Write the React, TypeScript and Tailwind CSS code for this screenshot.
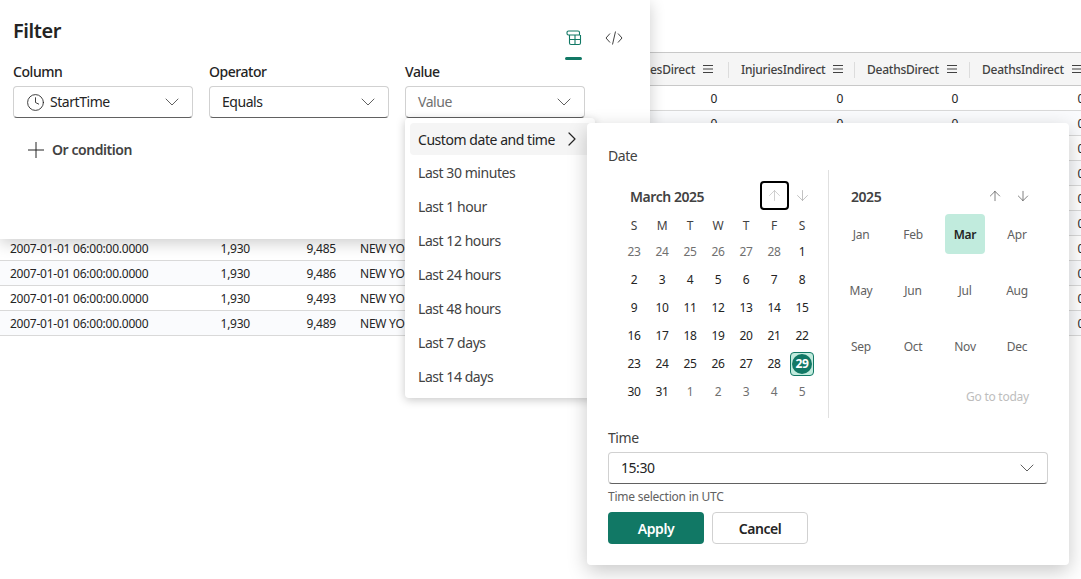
import { ArrowDown, ArrowUp, ChevronDown, ChevronRight, Clock } from 'lucide-react'

const rows = [
  { id: '9,481', shade: false },
  { id: '9,482', shade: true },
  { id: '9,483', shade: false },
  { id: '9,484', shade: true },
  { id: '9,487', shade: false },
  { id: '9,488', shade: true },
  { id: '9,485', shade: false },
  { id: '9,486', shade: true },
  { id: '9,493', shade: false },
  { id: '9,489', shade: true },
]

const gridCols = 'grid grid-cols-[262px_86px_254px_126px_126px_115px_126px]'

const quickRanges = [
  'Last 30 minutes',
  'Last 1 hour',
  'Last 12 hours',
  'Last 24 hours',
  'Last 48 hours',
  'Last 7 days',
  'Last 14 days',
]

const weeks = [
  ['23', '24', '25', '26', '27', '28', '1'],
  ['2', '3', '4', '5', '6', '7', '8'],
  ['9', '10', '11', '12', '13', '14', '15'],
  ['16', '17', '18', '19', '20', '21', '22'],
  ['23', '24', '25', '26', '27', '28', '29'],
  ['30', '31', '1', '2', '3', '4', '5'],
]

const months = ['Jan', 'Feb', 'Mar', 'Apr', 'May', 'Jun', 'Jul', 'Aug', 'Sep', 'Oct', 'Nov', 'Dec']

function MenuLines() {
  return (
    <svg width="12" height="10" viewBox="0 0 12 10" className="shrink-0 text-[#424242]">
      <path d="M1 1.5h10M1 5h10M1 8.5h10" stroke="currentColor" strokeWidth="1.2" />
    </svg>
  )
}

function HeaderCell({ label }: { label: string }) {
  return (
    <div className="flex items-center relative pl-[13px] gap-[7px]">
      <span className="absolute left-0 top-[9px] h-[16px] w-px bg-[#dcdcdc]" />
      <span className="whitespace-nowrap font-medium pt-[2px]">{label}</span>
      <MenuLines />
    </div>
  )
}

function DataTable() {
  return (
    <div className="absolute left-0 top-[52px] w-[1095px] text-[12px] tracking-[-0.02em] text-[#242424]">
      <div className={`${gridCols} h-[34px] bg-[#f5f5f5] border-y border-[#c8c8c8] text-[#424242]`}>
        <div />
        <div />
        <div />
        <div className="flex items-center justify-end pr-[14px] gap-[7px]">
          <span className="whitespace-nowrap font-medium pt-[2px]">InjuriesDirect</span>
          <MenuLines />
        </div>
        <HeaderCell label="InjuriesIndirect" />
        <HeaderCell label="DeathsDirect" />
        <HeaderCell label="DeathsIndirect" />
      </div>
      {rows.map((row) => (
        <div
          key={row.id}
          className={`${gridCols} h-[25px] items-center pt-px border-b border-[#d9d9d9] ${row.shade ? 'bg-[#fafbfd]' : 'bg-white'}`}
        >
          <div className="flex justify-between pl-[10px] pr-[12px]">
            <span>2007-01-01 06:00:00.0000</span>
            <span>1,930</span>
          </div>
          <div className="text-right pr-[12px]">{row.id}</div>
          <div className="pl-[12px]">NEW YORK</div>
          <div className="text-right pr-[11px]">0</div>
          <div className="text-right pr-[11px]">0</div>
          <div className="text-right pr-[11px]">0</div>
          <div className="text-right pr-[11px]">0</div>
        </div>
      ))}
    </div>
  )
}

function SelectBox({ value, placeholder, withClock }: { value: string; placeholder?: boolean; withClock?: boolean }) {
  return (
    <div className="h-[32px] flex items-center bg-white border border-[#d1d1d1] border-b-[#616161] rounded-[4px] pl-[12px] pr-[8px]">
      {withClock && <Clock size={19} strokeWidth={1.1} className="mr-[5px] text-[#242424] shrink-0" />}
      <span className={`text-[14px] leading-none flex-1 ${placeholder ? 'text-[#707070]' : 'text-[#242424]'}`}>{value}</span>
      <ChevronDown size={24} strokeWidth={1} className="text-[#616161]" />
    </div>
  )
}

function Field({ label, children }: { label: string; children: React.ReactNode }) {
  return (
    <div className="w-[180px]">
      <div className="h-[20px] mb-[4px] text-[14px] font-medium leading-[20px] text-[#242424]">{label}</div>
      {children}
    </div>
  )
}

function FilterPanel() {
  return (
    <div className="absolute left-0 top-0 w-[650px] h-[239px] bg-white rounded-br-[4px] shadow-[0_4px_16px_rgba(0,0,0,0.2)] pl-[13px]">
      <div className="flex h-[62px]">
        <h1 className="text-[20px] font-semibold text-[#242424] leading-[28px] pt-[17px] flex-1">Filter</h1>
        <div className="flex mr-[27px] pt-[30px] gap-[23px]">
          <div className="flex flex-col items-center w-[17px]">
            <svg width="16" height="16" viewBox="0 0 16 16" fill="none" stroke="#117865" strokeWidth="1.1">
              <path d="M2.5 1h9.5a1.5 1.5 0 0 1 1.5 1.5V5H2.5a1.5 1.5 0 0 1-1.5-1.5v-1A1.5 1.5 0 0 1 2.5 1z" />
              <path d="M3.5 5v8a1.5 1.5 0 0 0 1.5 1.5h8a1.5 1.5 0 0 0 1.5-1.5V5M3.5 9.5h11M9 5v9.5" />
            </svg>
            <span className="w-[17px] h-[3px] mt-[11px] rounded-full bg-[#117865]" />
          </div>
          <svg width="18" height="16" viewBox="0 0 18 16" fill="none" stroke="#424242" strokeWidth="1">
            <path d="M5 3.5 1 8l4 4.5M13 3.5 17 8l-4 4.5M10.5 1.5l-3 13" />
          </svg>
        </div>
      </div>
      <div className="flex gap-[16px]">
        <Field label="Column">
          <SelectBox value="StartTime" withClock />
        </Field>
        <Field label="Operator">
          <SelectBox value="Equals" />
        </Field>
        <Field label="Value">
          <SelectBox value="Value" placeholder />
        </Field>
      </div>
      <div className="flex items-center mt-[21px] ml-[15px] gap-[8px] text-[#424242]">
        <svg width="16" height="16" viewBox="0 0 16 16" fill="none" stroke="#242424" strokeWidth="1">
          <path d="M8 0v16M0 8h16" />
        </svg>
        <span className="text-[14px] font-semibold">Or condition</span>
      </div>
    </div>
  )
}

function ValueMenu() {
  return (
    <div className="absolute left-[405px] top-[118px] w-[190px] h-[280px] bg-white rounded-[4px] shadow-[0_2px_10px_rgba(0,0,0,0.22)] pt-[5px] pl-[5px] text-[14px] text-[#424242]">
      <div className="h-[32px] flex items-center bg-[#f5f5f5] rounded-[4px] pl-[8px] text-[#242424] whitespace-nowrap">
        <span>Custom date and time</span>
        <ChevronRight size={24} strokeWidth={1.2} className="ml-[5px]" />
      </div>
      {quickRanges.map((item) => (
        <div key={item} className="h-[34px] flex items-center pl-[8px] first:mt-[1px]">
          {item}
        </div>
      ))}
    </div>
  )
}

function DayCell({ day, muted, selected }: { day: string; muted: boolean; selected: boolean }) {
  if (selected) {
    return (
      <div className="h-[28px] flex items-center justify-center">
        <div className="w-[24px] h-[24px] flex items-center justify-center rounded-[4px] bg-[#c1ebdd] border border-[#117865]">
          <span className="w-[20px] h-[20px] flex items-center justify-center rounded-full bg-[#117865] text-white font-bold">{day}</span>
        </div>
      </div>
    )
  }
  return <div className={`h-[28px] flex items-center justify-center ${muted ? 'text-[#707070]' : 'text-[#242424]'}`}>{day}</div>
}

function DatePanel() {
  return (
    <div className="absolute left-[587px] top-[123px] w-[482px] h-[442px] bg-white rounded-[4px] shadow-[0_6px_20px_rgba(0,0,0,0.22)] pl-[21px] pr-[21px] pt-[23px]">
      <div className="text-[14px] leading-[20px] text-[#424242]">Date</div>
      <div className="flex mt-[4px]">
        <div className="w-[220px] shrink-0 pt-[12px]">
          <div className="flex items-center h-[28px] pl-[22px] pr-[12px]">
            <span className="text-[14px] font-semibold text-[#424242] flex-1">March 2025</span>
            <div className="flex items-center -mt-[2px]">
              <div className="w-[29px] h-[29px] flex items-center justify-center rounded-[4px] border-2 border-black">
                <ArrowUp size={17} strokeWidth={1} className="text-[#bdbdbd]" />
              </div>
              <div className="w-[27px] flex justify-center">
                <ArrowDown size={17} strokeWidth={1} className="text-[#a8a8a8]" />
              </div>
            </div>
          </div>
          <div className="grid grid-cols-[repeat(7,28px)] ml-[12px] mt-[4px] text-[12px] tracking-[-0.02em]">
            {['S', 'M', 'T', 'W', 'T', 'F', 'S'].map((d, i) => (
              <div key={i} className="h-[24px] flex items-center justify-center text-[#424242]">{d}</div>
            ))}
            {weeks.map((week, w) =>
              week.map((day, i) => (
                <DayCell
                  key={`${w}-${i}`}
                  day={day}
                  muted={(w === 0 && i < 6) || (w === 5 && i > 1)}
                  selected={w === 4 && i === 6}
                />
              )),
            )}
          </div>
        </div>
        <div className="w-px h-[248px] bg-[#e0e0e0]" />
        <div className="flex-1 pt-[12px] pl-[6px]">
          <div className="flex items-center h-[28px] pl-[16px] w-[192px]">
            <span className="text-[14px] font-semibold text-[#424242] flex-1">2025</span>
            <div className="flex gap-[12px] mr-[-4px]">
              <ArrowUp size={16} strokeWidth={1} className="text-[#424242]" />
              <ArrowDown size={16} strokeWidth={1} className="text-[#424242]" />
            </div>
          </div>
          <div className="grid grid-cols-[repeat(4,52px)] -mt-[4px] text-[12px] tracking-[-0.02em] text-[#616161]">
            {months.map((m) => (
              <div key={m} className="h-[56px] flex items-center justify-center">
                {m === 'Mar' ? (
                  <span className="w-[40px] h-[40px] flex items-center justify-center rounded-[4px] bg-[#c1ebdd] font-semibold text-[#242424] pt-[2px]">{m}</span>
                ) : (
                  <span className="pt-[2px]">{m}</span>
                )}
              </div>
            ))}
          </div>
          <div className="mt-[14px] w-[194px] text-right text-[12px] tracking-[-0.02em] text-[#bdbdbd]">Go to today</div>
        </div>
      </div>
      <div className="text-[14px] leading-[20px] text-[#424242] mt-[10px]">Time</div>
      <div className="h-[32px] w-[440px] mt-[4px] flex items-center justify-between bg-white border border-[#d1d1d1] border-b-[#616161] rounded-[4px] pl-[12px] pr-[8px]">
        <span className="text-[14px] text-[#242424] pb-[2px]">15:30</span>
        <ChevronDown size={24} strokeWidth={1} className="text-[#616161]" />
      </div>
      <div className="text-[12px] leading-[16px] tracking-[-0.02em] text-[#616161] mt-[5px]">Time selection in UTC</div>
      <div className="flex gap-[8px] mt-[7px]">
        <button className="w-[96px] h-[32px] rounded-[4px] bg-[#117865] text-white text-[14px] font-semibold">Apply</button>
        <button className="w-[96px] h-[32px] rounded-[4px] bg-white border border-[#d1d1d1] text-[#242424] text-[14px] font-semibold">Cancel</button>
      </div>
    </div>
  )
}

export default function App() {
  return (
    <div className="relative w-[1081px] h-[579px] overflow-hidden bg-white font-['Noto_Sans',sans-serif] tracking-[-0.028em]">
      <DataTable />
      <FilterPanel />
      <ValueMenu />
      <DatePanel />
    </div>
  )
}
